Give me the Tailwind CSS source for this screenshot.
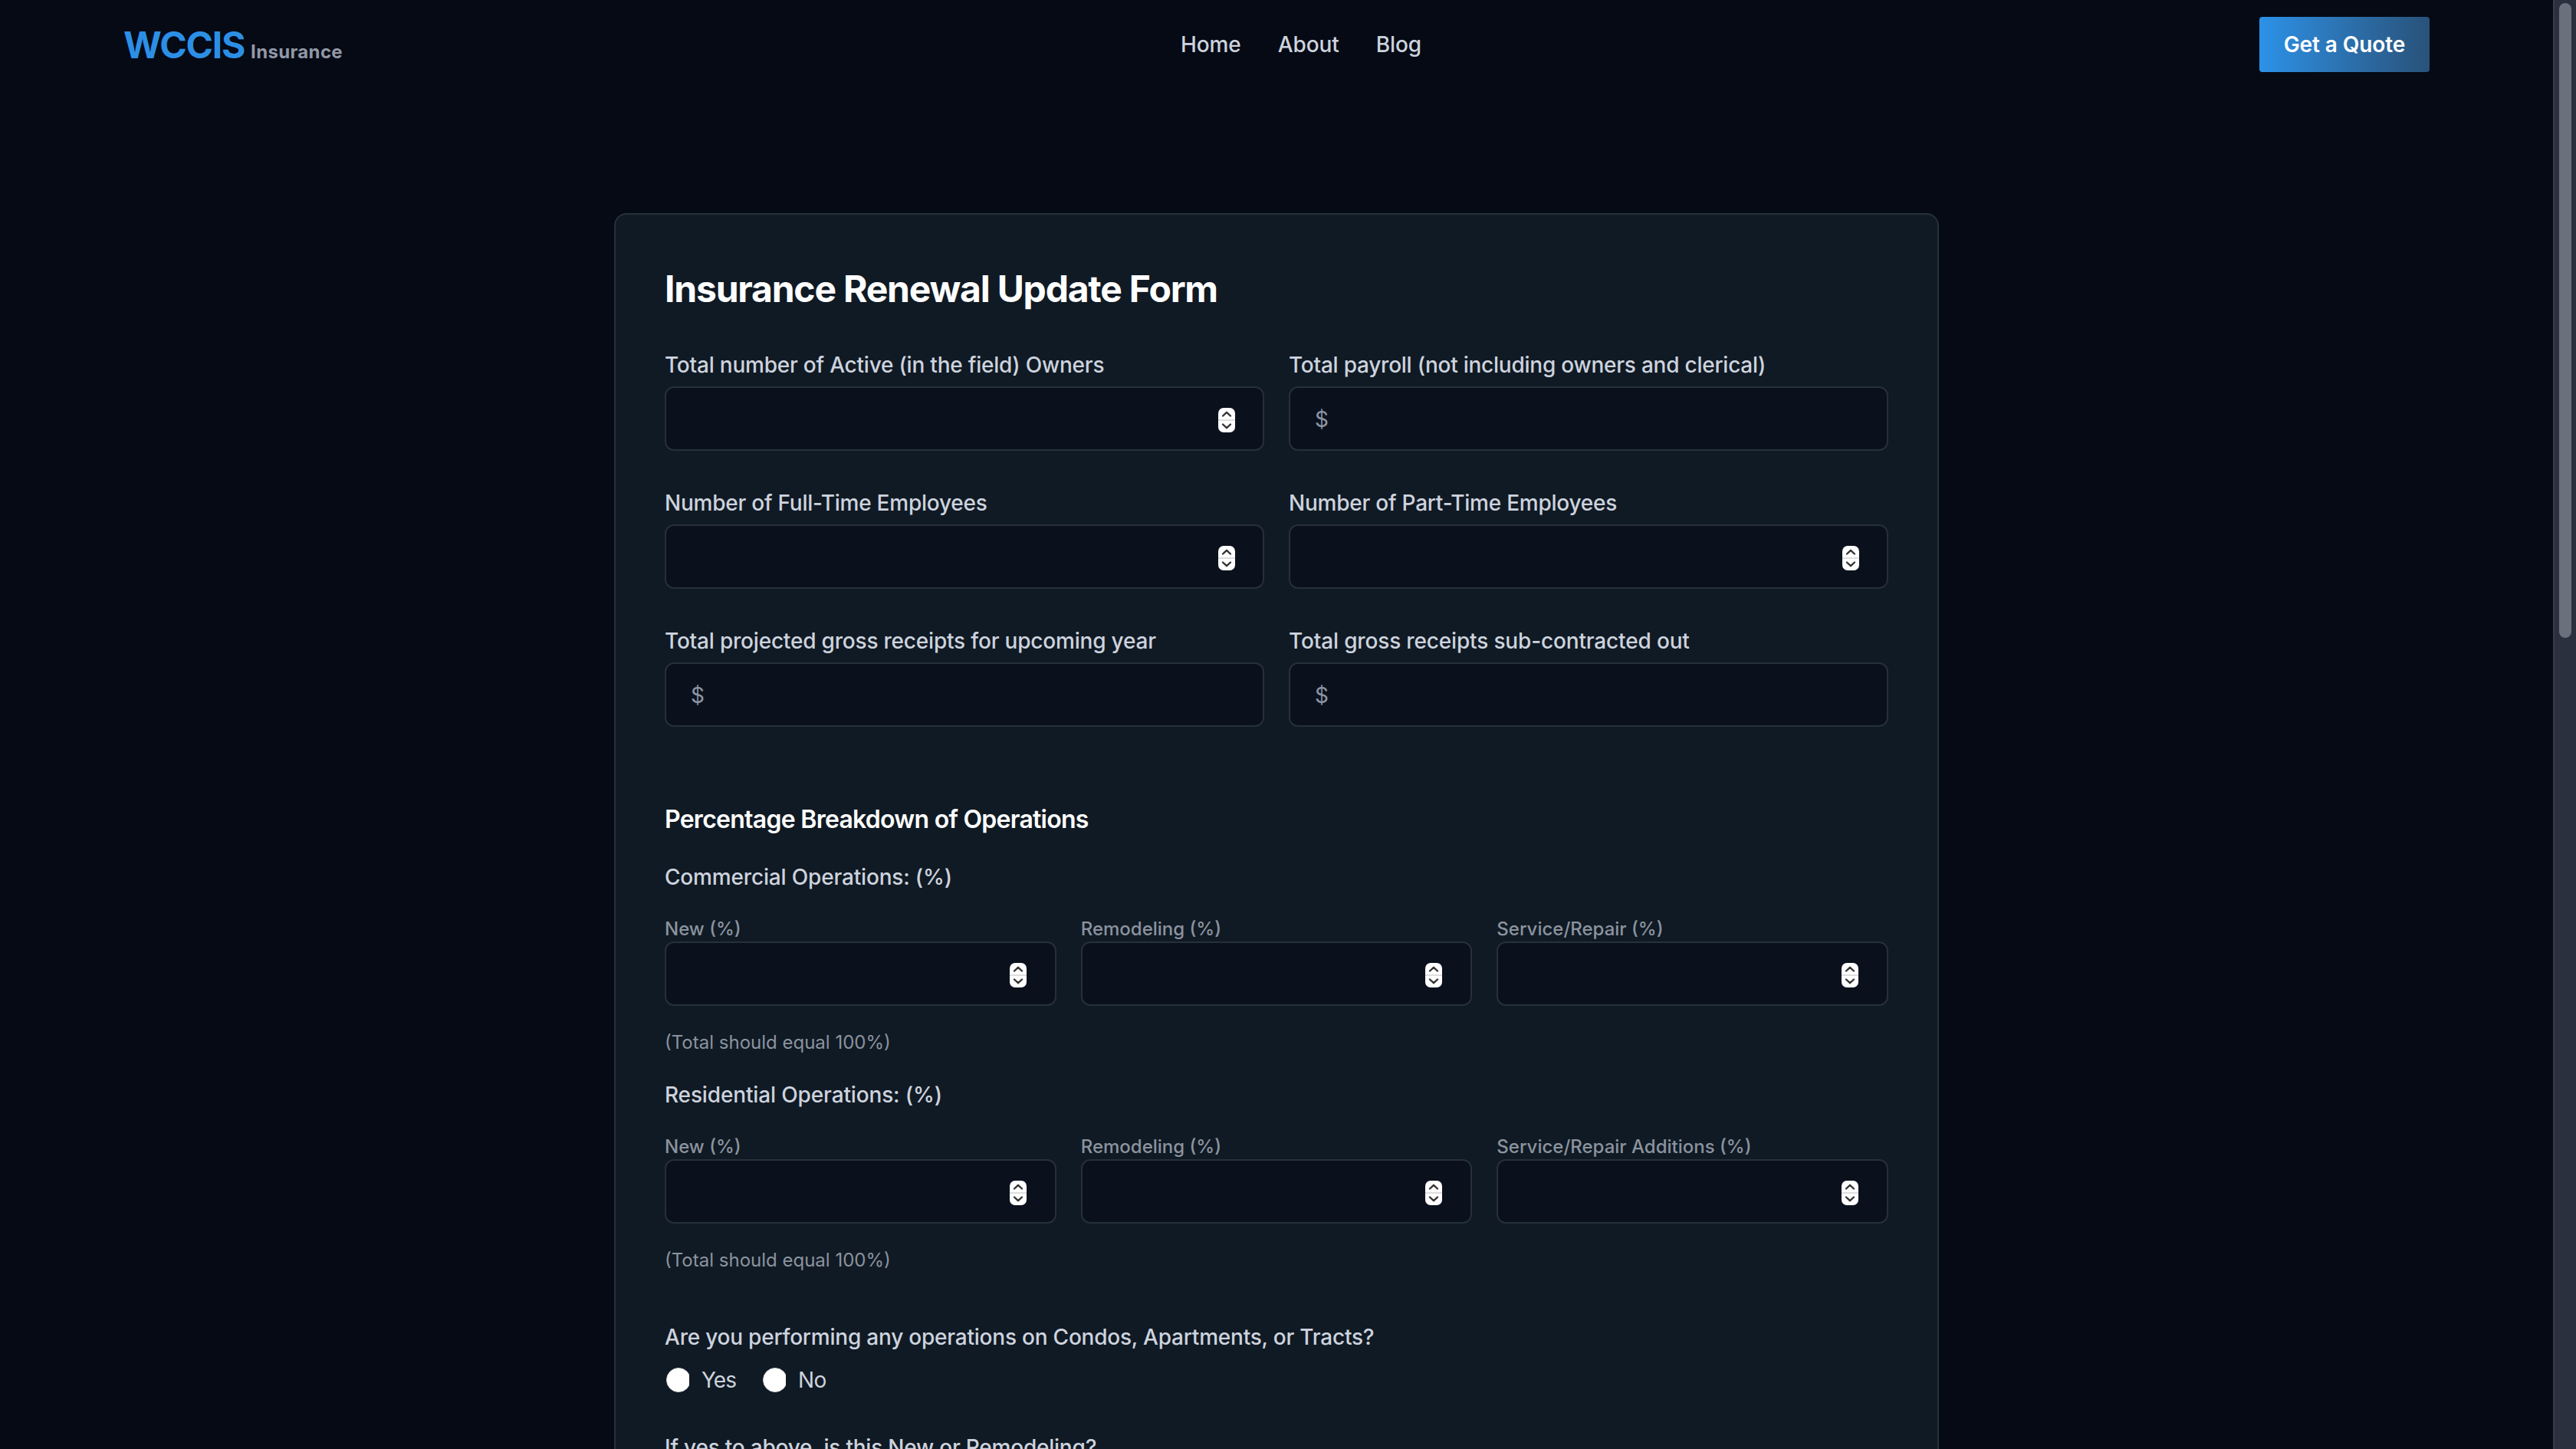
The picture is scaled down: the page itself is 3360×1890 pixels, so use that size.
<!DOCTYPE html>
<html lang="en">
<head>
    <meta charset="UTF-8">
    <meta name="viewport" content="width=device-width, initial-scale=1.0">
    <title>WCCIS Insurance - Renewal Update Form</title>
    <!-- Tailwind CSS CDN -->
    <script src="https://cdn.jsdelivr.net/npm/@tailwindcss/browser@4"></script>
</head>
<body class="flex h-screen overflow-hidden bg-[#050a15] font-['Inter',sans-serif] text-[28px] leading-10 text-[#cdd3de]">

    <!-- Stepper and radio shapes, reused by the fields below -->
    <svg class="hidden" xmlns="http://www.w3.org/2000/svg">
        <symbol id="stepper" viewBox="0 0 22 32">
            <rect width="22" height="32" rx="7" fill="#fff"/>
            <rect y="15" width="22" height="2" fill="#dedede"/>
            <path d="M6 10.5 11 5.8 16 10.5M6 21.5 11 26.2 16 21.5" fill="none" stroke="#333" stroke-width="2.4" stroke-linecap="round" stroke-linejoin="round"/>
        </symbol>
        <symbol id="radio" viewBox="0 0 30 32">
            <circle cx="16" cy="16" r="15.5" fill="#fff" stroke="#d5d7da"/>
        </symbol>
    </svg>

    <div class="flex h-full flex-1 flex-col items-center overflow-hidden">
        <!-- Header -->
        <header class="flex h-[116px] w-[3008px] shrink-0 items-center justify-between">
            <a href="#" class="flex items-baseline gap-2 pt-0.5">
                <span class="text-5xl leading-[64px] font-bold tracking-[-1.3px] text-[#2c8fe6]">WCCIS</span>
                <span class="text-2xl font-bold tracking-[0.35px] text-[#9298a5]">Insurance</span>
            </a>
            <nav class="flex gap-12 font-medium tracking-[-0.1px]">
                <a href="#">Home</a>
                <a href="#">About</a>
                <a href="#">Blog</a>
            </nav>
            <a href="#" class="flex h-[72px] w-[222px] items-center justify-center rounded bg-linear-to-r from-[#2c92e8] to-[#28527a] font-semibold tracking-[-0.1px] text-white">Get a Quote</a>
        </header>

        <!-- Form card -->
        <main class="mt-[162px] w-[1728px] shrink-0 rounded-2xl border-2 border-[#26303b] bg-[#101a24] p-16">
            <h1 class="mb-[47px] pt-px text-5xl leading-[64px] font-bold tracking-[-1.2px] text-white">Insurance Renewal Update Form</h1>

            <div class="grid grid-cols-2 gap-x-8 gap-y-12">
                <div>
                    <label class="mb-2 block font-medium tracking-[-0.22px]">Total number of Active (in the field) Owners</label>
                    <div class="flex h-[84px] items-center justify-end rounded-xl border-2 border-[#26303b] bg-[#0a111d] pr-9 pt-2">
                        <svg class="mb-1 h-8 w-[22px]"><use href="#stepper"/></svg>
                    </div>
                </div>
                <div>
                    <label class="mb-2 block font-medium tracking-[-0.24px]">Total payroll (not including owners and clerical)</label>
                    <div class="flex h-[84px] items-center rounded-xl border-2 border-[#26303b] bg-[#0a111d] px-8 pt-0.5 text-[#8d95a2]">$</div>
                </div>
                <div>
                    <label class="mb-2 block font-medium tracking-[-0.24px]">Number of Full-Time Employees</label>
                    <div class="flex h-[84px] items-center justify-end rounded-xl border-2 border-[#26303b] bg-[#0a111d] pr-9 pt-2">
                        <svg class="mb-1 h-8 w-[22px]"><use href="#stepper"/></svg>
                    </div>
                </div>
                <div>
                    <label class="mb-2 block font-medium tracking-[-0.24px]">Number of Part-Time Employees</label>
                    <div class="flex h-[84px] items-center justify-end rounded-xl border-2 border-[#26303b] bg-[#0a111d] pr-9 pt-2">
                        <svg class="mb-1 h-8 w-[22px]"><use href="#stepper"/></svg>
                    </div>
                </div>
                <div>
                    <label class="mb-2 block font-medium tracking-[-0.2px]">Total projected gross receipts for upcoming year</label>
                    <div class="flex h-[84px] items-center rounded-xl border-2 border-[#26303b] bg-[#0a111d] px-8 pt-0.5 text-[#8d95a2]">$</div>
                </div>
                <div>
                    <label class="mb-2 block font-medium tracking-[-0.16px]">Total gross receipts sub-contracted out</label>
                    <div class="flex h-[84px] items-center rounded-xl border-2 border-[#26303b] bg-[#0a111d] px-8 pt-0.5 text-[#8d95a2]">$</div>
                </div>
            </div>

            <!-- Percentage breakdown -->
            <h2 class="mt-24 mb-[31px] pt-px text-[32px] leading-[48px] font-semibold tracking-[-0.73px] text-white">Percentage Breakdown of Operations</h2>

            <h3 class="mb-8 font-medium tracking-[-0.17px]">Commercial Operations: (%)</h3>
            <div class="grid grid-cols-3 gap-8">
                <div>
                    <label class="block text-2xl font-medium text-[#8b939f]">New (%)</label>
                    <div class="flex h-[84px] items-center justify-end rounded-xl border-2 border-[#26303b] bg-[#0a111d] pr-[37px] pt-2">
                        <svg class="mb-1 h-8 w-[22px]"><use href="#stepper"/></svg>
                    </div>
                </div>
                <div>
                    <label class="block text-2xl font-medium text-[#8b939f]">Remodeling (%)</label>
                    <div class="flex h-[84px] items-center justify-end rounded-xl border-2 border-[#26303b] bg-[#0a111d] pr-[37px] pt-2">
                        <svg class="mb-1 h-8 w-[22px]"><use href="#stepper"/></svg>
                    </div>
                </div>
                <div>
                    <label class="block text-2xl font-medium text-[#8b939f]">Service/Repair (%)</label>
                    <div class="flex h-[84px] items-center justify-end rounded-xl border-2 border-[#26303b] bg-[#0a111d] pr-[37px] pt-2">
                        <svg class="mb-1 h-8 w-[22px]"><use href="#stepper"/></svg>
                    </div>
                </div>
            </div>
            <p class="my-8 text-2xl text-[#8b939f]">(Total should equal 100%)</p>

            <h3 class="mb-8 font-medium tracking-[-0.14px]">Residential Operations: (%)</h3>
            <div class="grid grid-cols-3 gap-8">
                <div>
                    <label class="block text-2xl font-medium text-[#8b939f]">New (%)</label>
                    <div class="flex h-[84px] items-center justify-end rounded-xl border-2 border-[#26303b] bg-[#0a111d] pr-[37px] pt-2">
                        <svg class="mb-1 h-8 w-[22px]"><use href="#stepper"/></svg>
                    </div>
                </div>
                <div>
                    <label class="block text-2xl font-medium text-[#8b939f]">Remodeling (%)</label>
                    <div class="flex h-[84px] items-center justify-end rounded-xl border-2 border-[#26303b] bg-[#0a111d] pr-[37px] pt-2">
                        <svg class="mb-1 h-8 w-[22px]"><use href="#stepper"/></svg>
                    </div>
                </div>
                <div>
                    <label class="block text-2xl font-medium text-[#8b939f]">Service/Repair Additions (%)</label>
                    <div class="flex h-[84px] items-center justify-end rounded-xl border-2 border-[#26303b] bg-[#0a111d] pr-[37px] pt-2">
                        <svg class="mb-1 h-8 w-[22px]"><use href="#stepper"/></svg>
                    </div>
                </div>
            </div>
            <p class="mt-8 mb-16 text-2xl text-[#8b939f]">(Total should equal 100%)</p>

            <!-- Condos, apartments and tracts -->
            <p class="mb-4 font-medium tracking-[-0.22px]">Are you performing any operations on Condos, Apartments, or Tracts?</p>
            <div class="mb-12 flex pl-0.5">
                <label class="flex w-[126px] items-center gap-4">
                    <svg class="h-8 w-[30px]"><use href="#radio"/></svg>
                    <span class="tracking-[-1px]">Yes</span>
                </label>
                <label class="flex items-center gap-4">
                    <svg class="h-8 w-[30px]"><use href="#radio"/></svg>
                    <span class="tracking-[-0.5px]">No</span>
                </label>
            </div>

            <p class="mb-4 font-medium tracking-[-0.22px]">If yes to above, is this New or Remodeling?</p>
        </main>
    </div>

    <!-- Scrollbar -->
    <div class="h-full w-[30px] shrink-0 border-l-2 border-[#363c47] bg-[#2a303d] pt-1 pl-1.5">
        <div class="h-[828px] w-4 rounded-full bg-[#6b717c]"></div>
    </div>
</body>
</html>
